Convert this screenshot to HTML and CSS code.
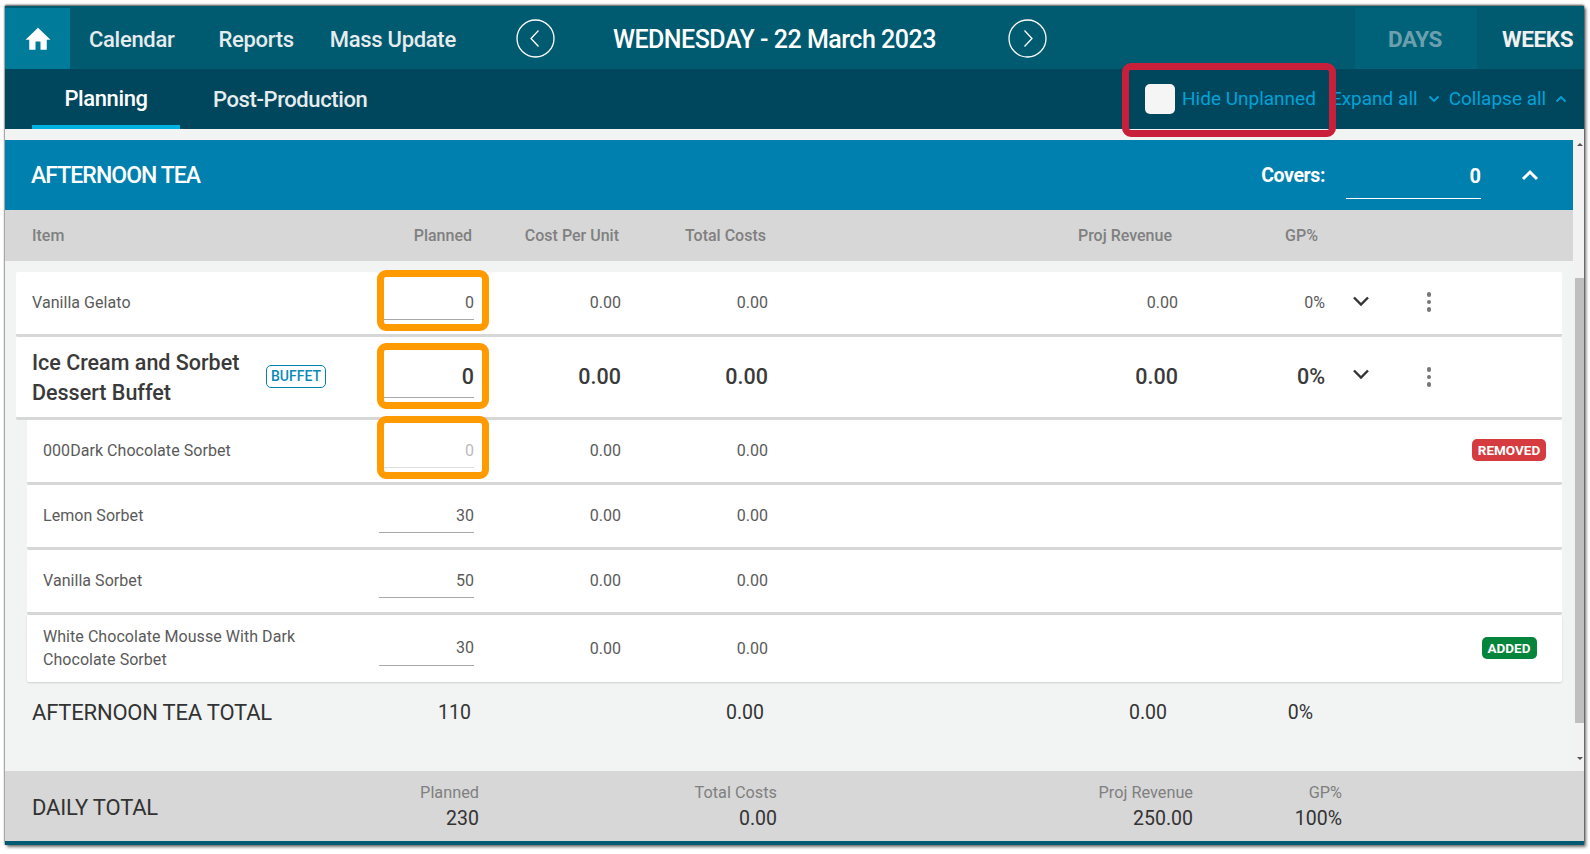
FILE: index.html
```html
<!DOCTYPE html>
<html lang="en">
<head>
<meta charset="utf-8">
<title>Planning</title>
<link rel="stylesheet" href="styles.css">
</head>
<body>
<div class="frame">
  <header class="topbar">
    <a class="home"><svg width="30" height="30" viewBox="0 0 24 24"><path fill="#fff" d="M10 20.5v-6.5h4v6.500h5v-8h3L12 3 2 12.500h3v8z"/></svg></a>
    <nav class="mainnav"><a>Calendar</a><a>Reports</a><a>Mass Update</a></nav>
    <div class="datenav">
      <span class="circle"><svg width="39" height="39" viewBox="0 0 39 39"><circle cx="19.500" cy="19.500" r="18.500" fill="none" stroke="#fff" stroke-width="1.300"/><path d="M22.500 11.500l-7.500 8 7.500 8" fill="none" stroke="#fff" stroke-width="1.300"/></svg></span>
      <span class="title">WEDNESDAY - 22 March 2023</span>
      <span class="circle"><svg width="39" height="39" viewBox="0 0 39 39"><circle cx="19.500" cy="19.500" r="18.500" fill="none" stroke="#fff" stroke-width="1.300"/><path d="M16.500 11.500l7.500 8-7.500 8" fill="none" stroke="#fff" stroke-width="1.300"/></svg></span>
    </div>
    <div class="modes"><span class="mode-days">DAYS</span><span class="mode-weeks">WEEKS</span></div>
  </header>
  <div class="subbar">
    <div class="tabs"><a class="tab active">Planning</a><a class="tab">Post-Production</a></div>
    <div class="tools">
      <span class="check"></span><span class="hide">Hide Unplanned</span>
      <span class="tool expand">Expand all<svg width="12" height="8" viewBox="0 0 12 8"><path d="M1.500 1.500L6 6l4.500-4.500" fill="none" stroke="#00a3d9" stroke-width="1.800"/></svg></span>
      <span class="tool collapse">Collapse all<svg width="12" height="8" viewBox="0 0 12 8"><path d="M1.500 6.500L6 2l4.500 4.500" fill="none" stroke="#00a3d9" stroke-width="1.800"/></svg></span>
    </div>
  </div>
  <main class="body">
    <div class="scrollarea">
      <section class="meal">
        <div class="mealhead">
          <h2>AFTERNOON TEA</h2>
          <div class="covers"><span class="covers-label">Covers:</span><span class="covers-input">0</span>
            <svg class="covers-chev" width="18" height="12" viewBox="0 0 18 12"><path d="M2 10l7-7 7 7" fill="none" stroke="#fff" stroke-width="3"/></svg></div>
        </div>
        <div class="colhead">
          <span>Item</span><span class="r">Planned</span><span class="r">Cost Per Unit</span><span class="r">Total Costs</span><span class="r">Proj Revenue</span><span class="r">GP%</span>
        </div>
        <div class="rows">
          <div class="row">
            <div class="name">Vanilla Gelato</div><div class="num"><span class="input in-short">0</span></div><div class="r">0.00</div><div class="r">0.00</div><div class="r">0.00</div><div class="r">0%</div>
            <div class="chev"><svg width="18" height="12" viewBox="0 0 18 12"><path d="M2 2.500l7 7 7-7" fill="none" stroke="#333" stroke-width="2.400"/></svg></div>
            <div class="dots"><i></i><i></i><i></i></div>
          </div>
          <div class="row big">
            <div class="name"><span>Ice Cream and Sorbet Dessert Buffet</span><b class="buffet">BUFFET</b></div><div class="num"><span class="input in-short">0</span></div><div class="r">0.00</div><div class="r">0.00</div><div class="r">0.00</div><div class="r">0%</div>
            <div class="chev"><svg width="18" height="12" viewBox="0 0 18 12"><path d="M2 2.500l7 7 7-7" fill="none" stroke="#333" stroke-width="2.400"/></svg></div>
            <div class="dots"><i></i><i></i><i></i></div>
          </div>
          <div class="row sub">
            <div class="name">000Dark Chocolate Sorbet</div><div class="num"><span class="input in-short off">0</span></div><div class="r">0.00</div><div class="r">0.00</div><div></div><div></div><div></div><div></div><div class="tag"><b class="removed">REMOVED</b></div>
          </div>
          <div class="row sub">
            <div class="name">Lemon Sorbet</div><div class="num"><span class="input">30</span></div><div class="r">0.00</div><div class="r">0.00</div>
          </div>
          <div class="row sub">
            <div class="name">Vanilla Sorbet</div><div class="num"><span class="input">50</span></div><div class="r">0.00</div><div class="r">0.00</div>
          </div>
          <div class="row sub last">
            <div class="name">White Chocolate Mousse With Dark Chocolate Sorbet</div><div class="num"><span class="input">30</span></div><div class="r">0.00</div><div class="r">0.00</div><div></div><div></div><div></div><div></div><div class="tag"><b class="added">ADDED</b></div>
          </div>
        </div>
        <div class="mealtotal">
          <span class="lbl">AFTERNOON TEA TOTAL</span><span class="r">110</span><span></span><span class="r">0.00</span><span class="r">0.00</span><span class="r">0%</span>
        </div>
      </section>
      <div class="scrollbar"><i class="up"></i><span class="thumb"></span><i class="down"></i></div>
    </div>
    <footer class="daily">
      <span class="lbl">DAILY TOTAL</span>
      <div class="stat"><small>Planned</small><b>230</b></div>
      <div class="stat"><small>Total Costs</small><b>0.00</b></div>
      <div class="stat"><small>Proj Revenue</small><b>250.00</b></div>
      <div class="stat"><small>GP%</small><b>100%</b></div>
    </footer>
  </main>
  <span class="mark red"></span>
  <span class="mark orange o1"></span>
  <span class="mark orange o2"></span>
  <span class="mark orange o3"></span>
</div>
</body>
</html>
```
FILE: styles.css
```css
* { box-sizing: border-box; }
html, body { margin: 0; padding: 0; background: #fff; }
body { font-family: Roboto, "Liberation Sans", sans-serif; overflow: hidden; height: 854px; padding: 6px 0 0 5px; }
.frame { position: relative; width: 1579px; height: 839px; display: flex; flex-direction: column; background: #f2f4f4; box-shadow: 0 -1px 2px rgba(0,0,0,.7), 2px 2px 3px rgba(0,0,0,.55), -1px 0 1px rgba(0,0,0,.12); }

.topbar { height: 63px; padding-top: 2px; background: #005a70; display: flex; align-items: center; color: #fff; white-space: nowrap; }
.home { width: 65px; height: 61px; background: #007b9a; display: flex; align-items: center; justify-content: center; }
.mainnav { display: flex; margin: 2px 0 0 19px; font-size: 22px; font-weight: 500; letter-spacing: -.3px; color: #e6ecee; }
.mainnav a:nth-child(2) { margin-left: 44px; }
.mainnav a:nth-child(3) { margin-left: 36px; }
.datenav { display: flex; align-items: center; margin-left: 60px; }
.circle { display: flex; width: 39px; height: 39px; }
.title { width: 453px; margin-top: 2px; padding-left: 58px; font-size: 25px; font-weight: 500; letter-spacing: -.5px; }
.modes { margin-left: auto; display: flex; height: 61px; font-size: 22.500px; font-weight: 700; letter-spacing: -.4px; }
.mode-days { width: 122px; background: #006279; color: #6da0ae; display: flex; align-items: center; justify-content: center; padding-right: 2px; }
.mode-weeks { width: 107px; display: flex; align-items: center; padding-left: 25px; color: #f0f0f0; }

.subbar { height: 60px; background: #00465c; display: flex; justify-content: space-between; white-space: nowrap; }
.tabs { display: flex; margin-left: 27px; font-size: 22px; font-weight: 500; letter-spacing: -.4px; }
.tab { height: 60px; display: flex; align-items: center; color: #e6ecee; }
.tab.active { width: 148px; justify-content: center; color: #fff; border-bottom: 4px solid #00b2e0; padding-top: 3px; }
.tab:not(.active) { margin-left: 33px; }
.tools { display: flex; align-items: center; font-size: 19px; color: #00a3d9; width: 439px; }
.check { width: 30px; height: 30px; border-radius: 5px; background: #f5f5f5; flex: none; }
.hide { margin: -2px 0 0 7px; }
.tool { display: inline-flex; align-items: center; margin-top: -2px; }
.tool svg { margin-left: 10px; margin-top: 2px; }
.expand { margin-left: 15px; }
.collapse { margin-left: 9px; }
.collapse svg { margin-left: 9px; }

.body { flex: 1; display: flex; flex-direction: column; min-height: 0; }
.scrollarea { flex: 1; display: flex; margin-top: 11px; min-height: 0; }
.meal { width: 1568px; }
.mealhead { height: 70px; background: #0080ae; color: #fff; display: flex; align-items: center; justify-content: space-between; padding-left: 26px; }
.mealhead h2 { margin: 0; font-size: 23px; font-weight: 500; letter-spacing: -.95px; }
.covers { display: flex; align-items: center; }
.covers-label { font-size: 19.500px; font-weight: 700; letter-spacing: -.4px; margin-right: 21px; }
.covers-input { width: 135px; height: 46px; margin-top: 2px; border-bottom: 1px solid #fff; text-align: right; font-size: 20px; font-weight: 700; line-height: 46px; }
.covers-chev { margin-left: 40px; margin-right: 34px; }

.colhead { height: 51px; background: #d7d7d7; color: #808080; font-size: 16px; font-weight: 500; display: grid; grid-template-columns: 345px 95px 147px 147px 406px 146px; align-items: center; padding-left: 27px; }
.r { text-align: right; }

.rows { padding: 11px 11px 0 11px; }
.row { display: grid; grid-template-columns: var(--name, 347px) 95px 147px 147px 410px 147px 72px 64px 96px; align-items: center; height: 65px; padding: 0 0 2px 16px; background: #fff; border-bottom: 3px solid #d7d7d7; border-radius: 2px; font-size: 16px; color: #5a5a5a; }
.name { line-height: 23px; padding-right: 60px; letter-spacing: .05px; }
.big { height: 83px; font-size: 21.500px; color: #3a3a3a; font-weight: 500; }
.big .r { font-weight: 500; }
.big .name { display: flex; align-items: center; line-height: 30.500px; padding: 4px 0 0; font-weight: 500; letter-spacing: 0; }
.big .name span { width: 231px; flex: none; }
.buffet { margin: -4px 0 0 3px; flex: none; width: 60px; height: 23px; border: 1px solid #0080ae; border-radius: 5px; color: #0a8ab8; font-size: 14px; font-weight: 500; line-height: 21px; text-align: center; }
.sub { margin-left: 11px; --name: 336px; }
.last { height: 67px; padding-bottom: 0; border-bottom: 0; box-shadow: 0 1px 2px rgba(0,0,0,.15); }
.last .name { margin-top: -2px; }
.last .input { line-height: 30px; }
.last .tag { margin-top: -2px; }

.num { display: flex; justify-content: flex-end; }
.input { display: block; width: 95px; height: 33px; margin-top: 2px; line-height: 32px; text-align: right; border-bottom: 1px solid #a8a8a8; }
.in-short { width: 90px; }
.big .input { height: 39px; margin-top: 4px; line-height: 36px; }
.off { color: #bbb; border-color: #dedede; }
.chev, .dots { display: flex; align-items: center; justify-content: center; }
.chev { margin-top: -3px; }
.big .chev { margin-top: -5px; }
.dots { flex-direction: column; gap: 3px; }
.big .dots { margin-top: 2px; }
.dots i { width: 4.500px; height: 4.500px; border-radius: 50%; background: #777; }
.tag { display: flex; justify-content: center; }
.tag b { height: 22px; line-height: 22px; padding: 0 6px; border-radius: 5px; color: #fff; font-size: 13.500px; font-weight: 700; }
.removed { background: #d63c3f; }
.added { background: #05843b; }

.mealtotal { display: grid; grid-template-columns: 345px 94px 293px 403px 146px; height: 60px; padding-left: 27px; align-items: center; font-size: 19.500px; color: #333; }
.mealtotal span:nth-child(3) { display: none; }
.lbl { font-size: 22px; font-weight: 400; letter-spacing: -.2px; color: #333; }
.daily .lbl { margin-top: 2px; }

.scrollbar { position: relative; width: 11px; height: 631px; flex: none; background: #f2f2f2; }
.thumb { position: absolute; left: 2px; right: 0; top: 138px; height: 445px; background: #bfbfbf; }
.scrollbar i { position: absolute; right: 1px; border: 3px solid transparent; }
.up { top: 0; border-bottom-color: #555 !important; }
.down { bottom: 8px; border-top-color: #555 !important; }

.daily { height: 74px; background: #d7d7d7; border-bottom: 4px solid #005a70; display: grid; grid-template-columns: 346px 101px 298px 416px 149px; align-items: center; padding-left: 27px; }
.stat { display: flex; flex-direction: column; align-items: flex-end; margin-top: 4px; }
.stat small { font-size: 16.300px; font-weight: 400; color: #808080; line-height: 22px; }
.stat b { font-size: 19.500px; font-weight: 400; color: #333; line-height: 30px; }

.mark { position: absolute; border-radius: 9px; border: 7px solid; z-index: 5; }
.red { left: 1117px; top: 57px; width: 214px; height: 74px; border-color: #c8203a; }
.orange { left: 372px; width: 112px; border-color: #ff9a00; }
.o1 { top: 264px; height: 61px; }
.o2 { top: 337px; height: 66px; }
.o3 { top: 410px; height: 63px; }
```
